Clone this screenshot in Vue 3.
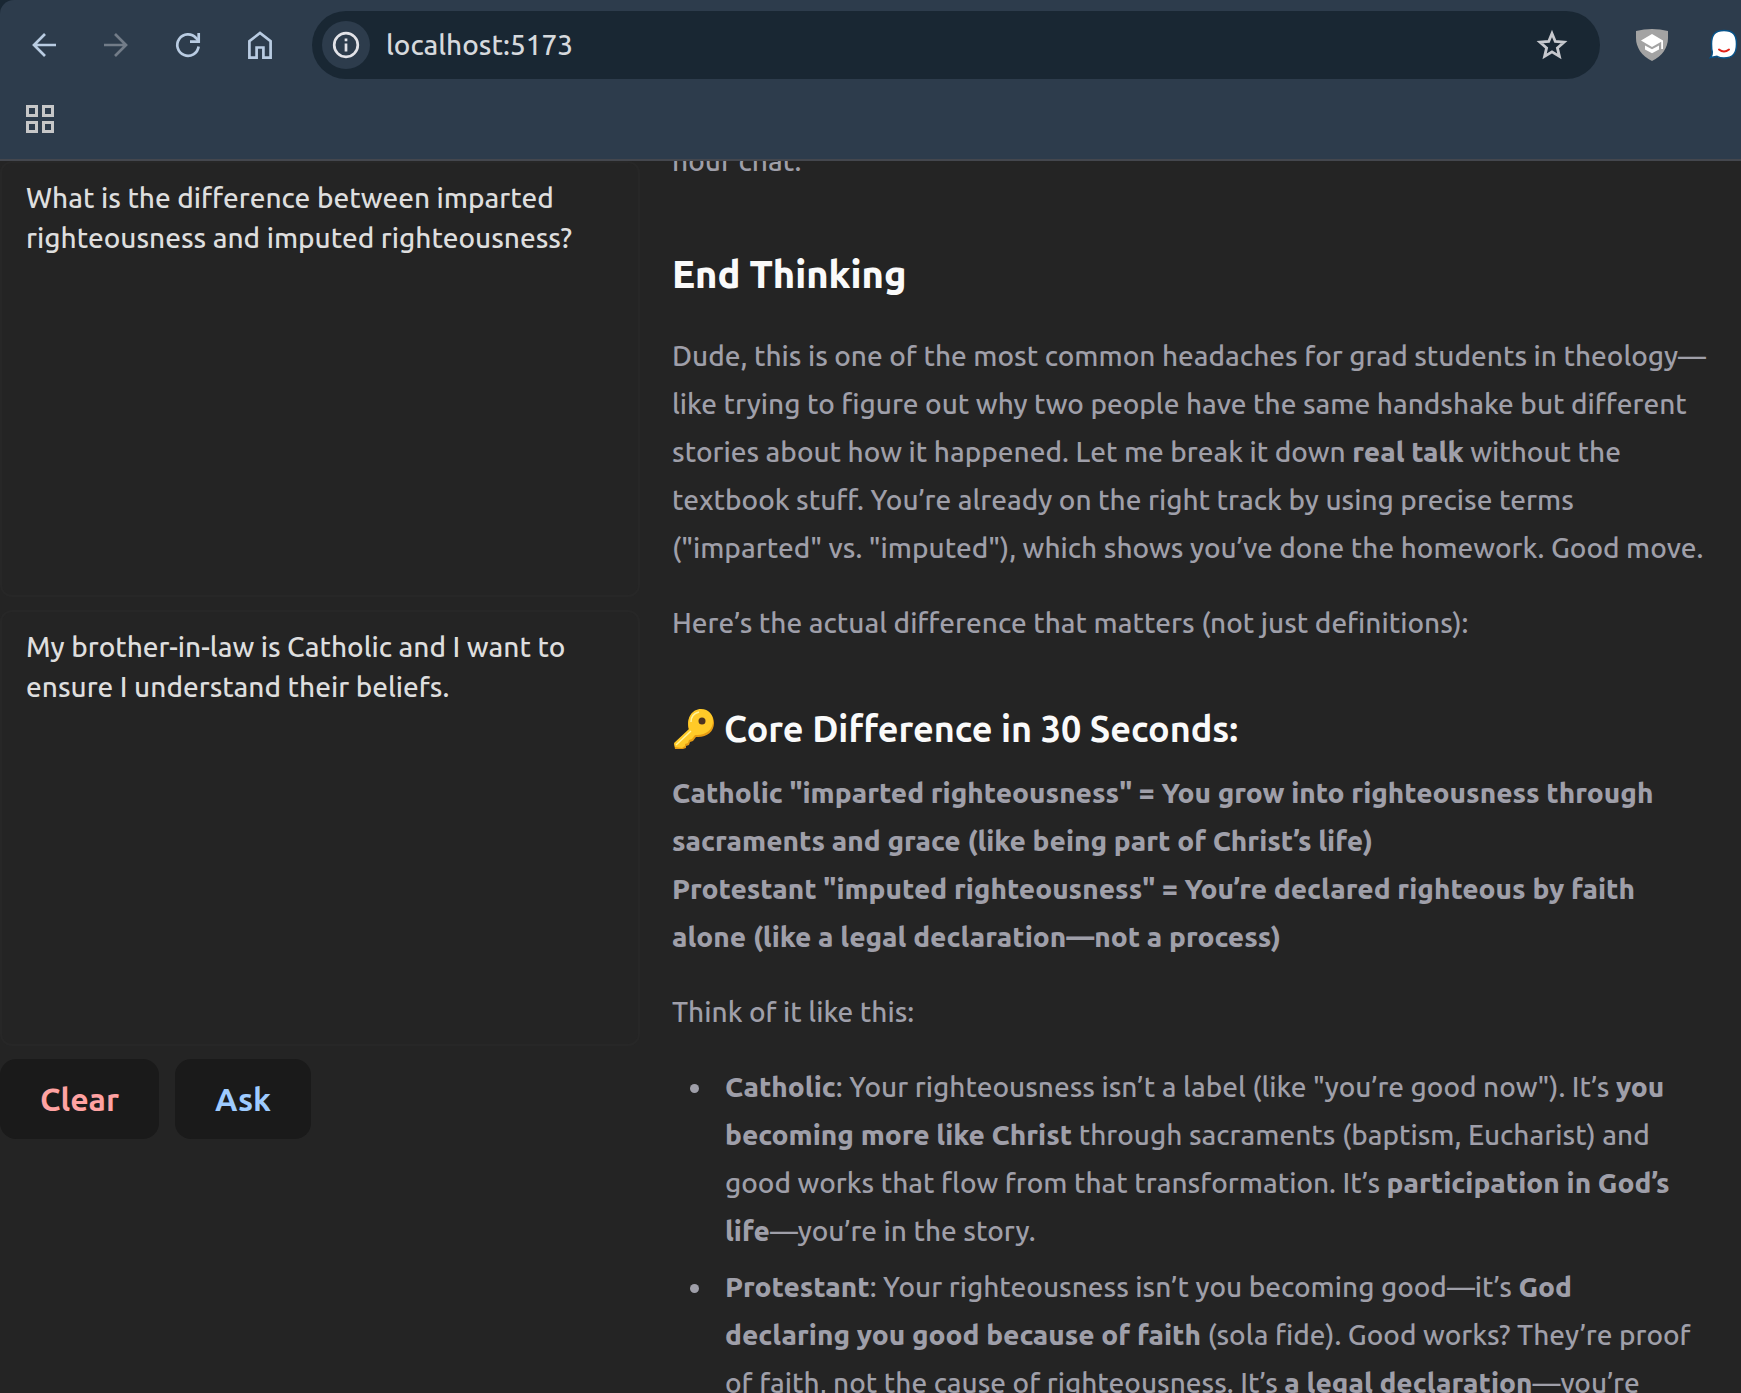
<script setup>
import { ref } from 'vue'

const address = ref('localhost:5173')
const question = ref('What is the difference between imparted righteousness and imputed righteousness?')
const context = ref('My brother-in-law is Catholic and I want to ensure I understand their beliefs.')

function clearAll() {
  question.value = ''
  context.value = ''
}
</script>

<template>
  <div class="browser">
    <header class="chrome">
      <nav class="toolbar" aria-label="Browser toolbar">
        <div class="nav-buttons">
          <button class="icon-button" aria-label="Back">
            <svg viewBox="0 0 32 32" fill="none" stroke="#b9cce2" stroke-width="2.7"><path d="M28 16H6M17 5 6 16l11 11" /></svg>
          </button>
          <button class="icon-button" aria-label="Forward">
            <svg viewBox="0 0 32 32" fill="none" stroke="#727c88" stroke-width="2.7"><path d="M4 16h22M15 5l11 11-11 11" /></svg>
          </button>
          <button class="icon-button" aria-label="Reload">
            <svg viewBox="0 0 32 32" fill="none" stroke="#b9cce2" stroke-width="2.7"><path d="M26.600 17.500A10.700 10.700 0 1 1 24 9l2.500 3" /><path d="M26.700 4v8.700H18" /></svg>
          </button>
          <button class="icon-button" aria-label="Home">
            <svg viewBox="0 0 32 32" fill="none" stroke="#b9cce2" stroke-width="2.7"><path d="M5.400 28.600V12.200L16 4l10.600 8.200v16.400h-7.200V18.500h-6.800v10.100z" /></svg>
          </button>
        </div>
        <div class="address-bar">
          <button class="site-info" aria-label="View site information">
            <svg viewBox="0 0 32 32" fill="none" stroke="#e3e3e8" stroke-width="2.7"><circle cx="16" cy="16" r="11.800" /><path d="M16 14.500v8M16 9.500v2.800" /></svg>
          </button>
          <input v-model="address" class="address" aria-label="Address" spellcheck="false" />
          <button class="icon-button" aria-label="Bookmark this page">
            <svg viewBox="0 0 32 32" fill="none" stroke="#c7c9ce" stroke-width="2.8"><path d="m16 4.500 3.300 8 8.700.7-6.600 5.700 2 8.500-7.400-4.500-7.400 4.500 2-8.500L4 13.200l8.700-.7z" /></svg>
          </button>
        </div>
        <div class="extensions">
          <button class="icon-button" aria-label="Scholar extension">
            <svg viewBox="0 0 32 32"><path d="M0 2Q16-2 32 2v7c0 10-6 18-16 23C6 27 0 19 0 9z" fill="#a3a3a3" /><path d="M5 11.500 16 5l11 6.500V20h-1.800v-7.300L16 18z" fill="#fff" /><path d="M9 16.500v4l7 3.700 7-3.700v-4l-7 3.800z" fill="#fff" /></svg>
          </button>
          <button class="icon-button" aria-label="Chat extension">
            <svg viewBox="0 0 32 32"><path d="M16 1.500c9 0 12.500 4 12.500 13.500s-3.500 14-12.500 14c-3 0-5-.5-7-1.600L2.500 28.500c1.500-2 2-3 1.800-5.500C3.500 20.500 3.500 18 3.500 15c0-9.500 3.500-13.500 12.500-13.500z" fill="#fff" stroke="#075389" stroke-width="1.500" /><path d="M11 20.500q5 4 10 0" fill="none" stroke="#e2231a" stroke-width="2" stroke-linecap="round" /></svg>
          </button>
        </div>
      </nav>
      <div class="bookmarks">
        <button class="icon-button" aria-label="Apps">
          <svg viewBox="0 0 32 32" fill="none" stroke="#c6c7c8" stroke-width="3"><path d="M3.500 3.500h9v9h-9zM19.500 3.500h9v9h-9zM3.500 19.500h9v9h-9zM19.500 19.500h9v9h-9z" /></svg>
        </button>
      </div>
    </header>

    <main class="page">
      <form class="prompt" @submit.prevent>
        <textarea v-model="question" aria-label="Question" spellcheck="false"></textarea>
        <textarea v-model="context" aria-label="Context" spellcheck="false"></textarea>
        <div class="actions">
          <button type="button" class="action clear" @click="clearAll">Clear</button>
          <button type="submit" class="action ask">Ask</button>
        </div>
      </form>

      <section class="output">
        <article class="prose">
          <p>hour chat.</p>
          <h2>End Thinking</h2>
          <p>
            Dude, this is one of the most common headaches for grad students in theology—like trying to figure out why two
            people have the same handshake but different stories about how it happened. Let me break it down
            <strong>real talk</strong> without the textbook stuff. You’re already on the right track by using precise terms
            ("imparted" vs. "imputed"), which shows you’ve done the homework. Good move.
          </p>
          <p>Here’s the actual difference that matters (not just definitions):</p>
          <h3>
            <svg class="key" viewBox="-2 0 42 40" aria-hidden="true">
              <path d="M0 35 15 21C12 10 18 1 27 1c8 0 13 6 13 13 0 9-8 15-18 14l-3 4-3 1-1 3-3 1v2l-3 1H1z" fill="#e59b13" />
              <path d="M0 34 15 20C12 9 18 0 27 0c8 0 12 6 12 12 0 9-8 15-18 14l-3 4-3 1-1 3-3 1v2l-3 2-7-1z" fill="#ffca28" />
              <path d="m2 36 15-14M17 13c0-6 4-9 8-10" fill="none" stroke="#fff59d" stroke-width="1.500" />
              <circle cx="28" cy="12" r="3.500" fill="#4b3320" />
            </svg>
            Core Difference in 30 Seconds:
          </h3>
          <p>
            <strong>Catholic "imparted righteousness" = You grow into righteousness through sacraments and grace (like being part of Christ’s life)</strong><br />
            <strong>Protestant "imputed righteousness" = You’re declared righteous by faith alone (like a legal declaration—not a process)</strong>
          </p>
          <p>Think of it like this:</p>
          <ul>
            <li>
              <strong>Catholic</strong>: Your righteousness isn’t a label (like "you’re good now"). It’s
              <strong>you becoming more like Christ</strong> through sacraments (baptism, Eucharist) and good works that flow
              from that transformation. It’s <strong>participation in God’s life</strong>—you’re in the story.
            </li>
            <li>
              <strong>Protestant</strong>: Your righteousness isn’t you becoming good—it’s
              <strong>God declaring you good because of faith</strong> (sola fide). Good works? They’re proof of faith, not
              the cause of righteousness. It’s <strong>a legal declaration</strong>—you’re
            </li>
          </ul>
        </article>
      </section>
    </main>
  </div>
</template>

<style>
html,
body {
  margin: 0;
  background: #242424;
}
</style>

<style scoped>
.browser {
  display: flex;
  flex-direction: column;
  height: 100vh;
  overflow: hidden;
  background: #242424;
  font-family: Ubuntu, "Noto Sans", sans-serif;
  font-weight: 500;
}

button,
input,
textarea {
  box-sizing: border-box;
  margin: 0;
  padding: 0;
  border: 0;
  background: none;
  font-family: inherit;
  font-weight: inherit;
}

svg {
  display: block;
}

.chrome {
  flex: none;
  border-bottom: 2px solid #44474e;
  border-top-left-radius: 14px;
  background: #2d3c4c;
  box-shadow: -16px -16px 0 #192733;
}

.toolbar {
  display: flex;
  align-items: center;
  gap: 36px;
  padding: 11px 1px 0 28px;
}

.nav-buttons {
  display: flex;
  gap: 40px;
}

.icon-button {
  flex: none;
  width: 32px;
  height: 32px;
}

.address-bar {
  display: flex;
  flex: 1;
  align-items: center;
  height: 68px;
  padding: 0 32px 0 10px;
  border-radius: 34px;
  background: #192733;
}

.site-info {
  display: grid;
  flex: none;
  place-items: center;
  width: 48px;
  height: 48px;
  border-radius: 50%;
  background: #2d3c4c;
}

.site-info svg {
  width: 32px;
  height: 32px;
}

.address {
  flex: 1;
  min-width: 0;
  padding-left: 16px;
  color: #d6d9dd;
  font-size: 28px;
  line-height: 40px;
}

.extensions {
  display: flex;
  gap: 40px;
}

.bookmarks {
  display: flex;
  padding: 24px;
}

.page {
  display: flex;
  flex: 1;
  gap: 32px;
  min-height: 0;
  padding-right: 32px;
}

.prompt {
  display: flex;
  flex: 0 0 640px;
  flex-direction: column;
  gap: 13px;
}

textarea {
  height: 436px;
  padding: 15px 24px;
  border: 2px solid #272727;
  border-radius: 12px;
  color: #dedede;
  font-size: 28px;
  line-height: 40px;
  resize: none;
}

.actions {
  display: flex;
  gap: 16px;
}

.action {
  height: 80px;
  padding: 0 40px;
  border-radius: 16px;
  background: #1a1a1a;
  font-size: 32px;
  font-weight: 600;
}

.clear {
  color: #ffa2a2;
}

.ask {
  color: #9ecbff;
}

.output {
  flex: 1;
  min-width: 0;
  overflow: hidden;
}

.prose {
  margin-top: -24px;
  color: #9f9fa9;
  font-size: 28px;
  line-height: 48px;
}

.prose p {
  margin: 0 0 27px;
}

.prose h2,
.prose h3 {
  color: #fafafa;
}

.prose h2 {
  margin: 65px 0 34px;
  font-size: 38px;
  font-weight: 800;
}

.prose h3 {
  display: flex;
  align-items: center;
  gap: 10px;
  margin: 58px 0 16px;
  font-size: 36px;
  font-weight: 700;
}

.key {
  width: 42px;
  height: 40px;
}

.prose strong {
  font-weight: 800;
}

.prose ul {
  margin: 0;
  padding: 0 13px 0 42px;
}

.prose li {
  margin-bottom: 8px;
  padding-left: 11px;
}
</style>
